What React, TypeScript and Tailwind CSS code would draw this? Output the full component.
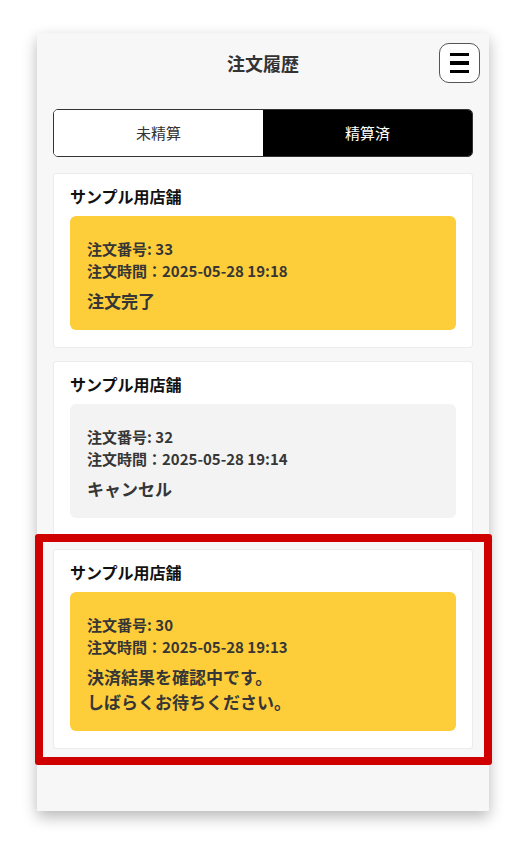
import React from 'react';

type Order = {
  id: number;
  time: string;
  status: string[];
  tone: 'yellow' | 'gray';
  highlight?: boolean;
};

const orders: Order[] = [
  { id: 33, time: '2025-05-28 19:18', status: ['注文完了'], tone: 'yellow' },
  { id: 32, time: '2025-05-28 19:14', status: ['キャンセル'], tone: 'gray' },
  {
    id: 30,
    time: '2025-05-28 19:13',
    status: ['決済結果を確認中です。', 'しばらくお待ちください。'],
    tone: 'yellow',
    highlight: true,
  },
];

function OrderCard({ order }: { order: Order }) {
  return (
    <div className="relative rounded-[3px] border border-[#ececec] bg-white px-4 pt-[11px] pb-[17px]">
      <p className="mb-[9px] text-[16px] leading-[22px] font-bold text-[#111]">サンプル用店舗</p>
      <div
        className={
          order.tone === 'yellow'
            ? 'rounded-[6px] bg-[#fecd3a] px-[17px] pt-[22px] pb-[17px] text-[#363636]'
            : 'rounded-[6px] bg-[#f3f3f3] px-[17px] pt-[22px] pb-[17px] text-[#363636]'
        }
      >
        <p className="text-[15px] leading-[22px] font-bold">注文番号: {order.id}</p>
        <p className="text-[15px] leading-[22px] font-bold">注文時間：{order.time}</p>
        <div className="mt-[6px]">
          {order.status.map((line) => (
            <p key={line} className="text-[17px] leading-[25px] font-bold">
              {line}
            </p>
          ))}
        </div>
      </div>
      {order.highlight && (
        <div className="pointer-events-none absolute -top-[16px] -right-[20px] -bottom-[17px] -left-[19px] rounded-[3px] border-[8px] border-[#d00000]" />
      )}
    </div>
  );
}

export default function App() {
  return (
    <div
      className="min-h-screen bg-white pt-[33px]"
      style={{ fontFamily: '"Noto Sans CJK JP", "Noto Sans", sans-serif' }}
    >
      <div className="ml-[37px] h-[778px] w-[452px] bg-[#f7f7f7] px-4 pt-[10px] shadow-[0_6px_14px_rgba(0,0,0,0.28)]">
        {/* Header */}
        <header className="relative flex h-[40px] items-center justify-center">
          <h1 className="text-[18px] font-bold text-[#333]">注文履歴</h1>
          <button className="absolute -right-[7px] top-0 flex h-[40px] w-[41px] flex-col items-center justify-center gap-[5px] rounded-[10px] border-[1.5px] border-[#555] bg-white">
            <span className="block h-[3.5px] w-[19px] bg-black" />
            <span className="block h-[3.5px] w-[19px] bg-black" />
            <span className="block h-[3.5px] w-[19px] bg-black" />
          </button>
        </header>

        {/* Tabs */}
        <div className="mt-[26px] flex h-[48px] overflow-hidden rounded-[5px] border border-[#333]">
          <button className="flex-1 bg-white text-[15px] text-[#333]">未精算</button>
          <button className="flex-1 bg-black text-[15px] text-white">精算済</button>
        </div>

        {/* Orders */}
        <div className="mt-[16px] flex flex-col gap-[13px]">
          {orders.map((order) => (
            <OrderCard key={order.id} order={order} />
          ))}
        </div>
      </div>
    </div>
  );
}
